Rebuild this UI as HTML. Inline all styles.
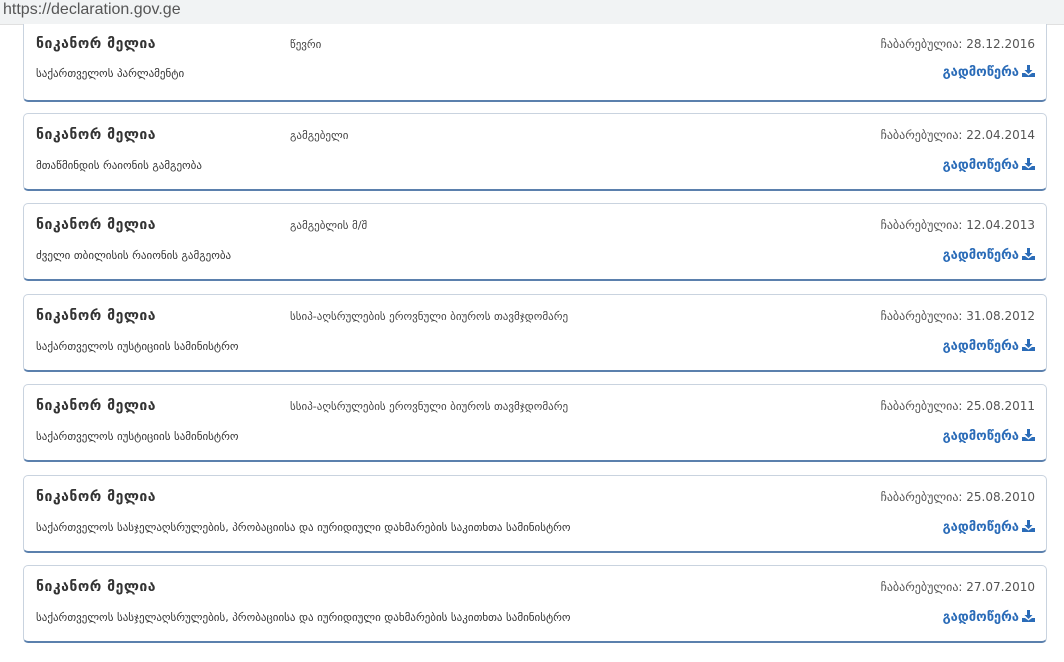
<!DOCTYPE html>
<html><head><meta charset="utf-8"><style>
body{margin:0;width:1064px;height:662px;overflow:hidden;background:#fff;font-family:"DejaVu Sans","Liberation Sans",sans-serif;color:#333;position:relative}
.bar{position:absolute;left:0;top:0;width:1064px;height:24px;background:#f1f3f4;border-bottom:1px solid #e0e0e0}
.bar span{position:absolute;left:3px;top:1px;font:16px "Liberation Sans",sans-serif;color:#555}
.card{position:absolute;left:23px;width:1024px;height:78px;border:1px solid #c9d3df;border-bottom:2px solid #5b80ad;border-radius:5px;background:#fff;box-sizing:border-box}
.n{position:absolute;left:12px;top:13px;font-weight:bold;font-size:14px;color:#333;letter-spacing:.5px}
.p{position:absolute;left:266px;top:15px;font-size:11px;color:#444}
.o{position:absolute;left:12px;top:45px;font-size:11px;color:#333}
.d{position:absolute;right:11px;top:14px;font-size:12px;color:#555}
.l{position:absolute;right:11px;top:44px;font-size:13px;color:#2b6cb8;font-weight:bold}
.l svg{vertical-align:-1px;margin-left:3px}
</style></head><body>
<div class="bar"><span>https://declaration.gov.ge</span></div>
<div class="card" style="top:24px;border-top:none;border-radius:0 0 5px 5px;height:78px">
<div class="n" style="top:12px">ნიკანორ მელია</div><div class="p" style="top:14px">წევრი</div><div class="o" style="top:43px">საქართველოს პარლამენტი</div><div class="d" style="top:13px">ჩაბარებულია: 28.12.2016</div><div class="l" style="top:41px">გადმოწერა<svg width="13" height="12" viewBox="0 0 13 12"><path d="M5 0h3v5h2.5L6.5 9 2.5 5H5z" fill="#2b6cb8"/><path d="M0 8h3l3.5 2.5L10 8h3v4H0z" fill="#2b6cb8"/></svg></div></div>
<div class="card" style="top:113px"><div class="n">ნიკანორ მელია</div><div class="p">გამგებელი</div><div class="o">მთაწმინდის რაიონის გამგეობა</div><div class="d">ჩაბარებულია: 22.04.2014</div><div class="l">გადმოწერა<svg width="13" height="12" viewBox="0 0 13 12"><path d="M5 0h3v5h2.5L6.5 9 2.5 5H5z" fill="#2b6cb8"/><path d="M0 8h3l3.5 2.5L10 8h3v4H0z" fill="#2b6cb8"/></svg></div></div>
<div class="card" style="top:203px"><div class="n">ნიკანორ მელია</div><div class="p">გამგებლის მ/შ</div><div class="o">ძველი თბილისის რაიონის გამგეობა</div><div class="d">ჩაბარებულია: 12.04.2013</div><div class="l">გადმოწერა<svg width="13" height="12" viewBox="0 0 13 12"><path d="M5 0h3v5h2.5L6.5 9 2.5 5H5z" fill="#2b6cb8"/><path d="M0 8h3l3.5 2.5L10 8h3v4H0z" fill="#2b6cb8"/></svg></div></div>
<div class="card" style="top:294px"><div class="n">ნიკანორ მელია</div><div class="p">სსიპ-აღსრულების ეროვნული ბიუროს თავმჯდომარე</div><div class="o">საქართველოს იუსტიციის სამინისტრო</div><div class="d">ჩაბარებულია: 31.08.2012</div><div class="l">გადმოწერა<svg width="13" height="12" viewBox="0 0 13 12"><path d="M5 0h3v5h2.5L6.5 9 2.5 5H5z" fill="#2b6cb8"/><path d="M0 8h3l3.5 2.5L10 8h3v4H0z" fill="#2b6cb8"/></svg></div></div>
<div class="card" style="top:384px"><div class="n">ნიკანორ მელია</div><div class="p">სსიპ-აღსრულების ეროვნული ბიუროს თავმჯდომარე</div><div class="o">საქართველოს იუსტიციის სამინისტრო</div><div class="d">ჩაბარებულია: 25.08.2011</div><div class="l">გადმოწერა<svg width="13" height="12" viewBox="0 0 13 12"><path d="M5 0h3v5h2.5L6.5 9 2.5 5H5z" fill="#2b6cb8"/><path d="M0 8h3l3.5 2.5L10 8h3v4H0z" fill="#2b6cb8"/></svg></div></div>
<div class="card" style="top:475px"><div class="n">ნიკანორ მელია</div><div class="o">საქართველოს სასჯელაღსრულების, პრობაციისა და იურიდიული დახმარების საკითხთა სამინისტრო</div><div class="d">ჩაბარებულია: 25.08.2010</div><div class="l">გადმოწერა<svg width="13" height="12" viewBox="0 0 13 12"><path d="M5 0h3v5h2.5L6.5 9 2.5 5H5z" fill="#2b6cb8"/><path d="M0 8h3l3.5 2.5L10 8h3v4H0z" fill="#2b6cb8"/></svg></div></div>
<div class="card" style="top:565px"><div class="n">ნიკანორ მელია</div><div class="o">საქართველოს სასჯელაღსრულების, პრობაციისა და იურიდიული დახმარების საკითხთა სამინისტრო</div><div class="d">ჩაბარებულია: 27.07.2010</div><div class="l">გადმოწერა<svg width="13" height="12" viewBox="0 0 13 12"><path d="M5 0h3v5h2.5L6.5 9 2.5 5H5z" fill="#2b6cb8"/><path d="M0 8h3l3.5 2.5L10 8h3v4H0z" fill="#2b6cb8"/></svg></div></div>
</body></html>
